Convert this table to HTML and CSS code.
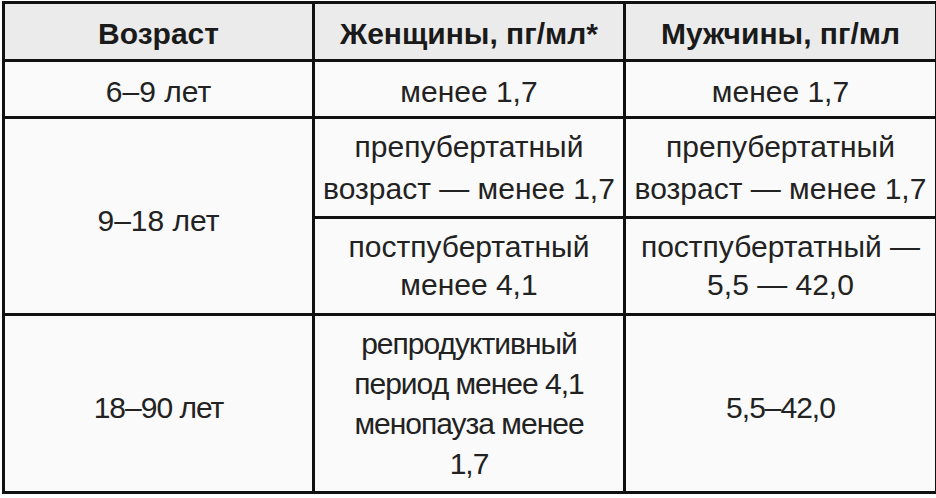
FILE: index.html
```html
<!DOCTYPE html>
<html lang="ru">
<head>
<meta charset="utf-8">
<link rel="stylesheet" href="styles.css">
</head>
<body>
<table class="norms">
  <colgroup><col class="c1"><col class="c2"><col class="c3"></colgroup>
  <thead>
    <tr class="r-head">
      <th>Возраст</th>
      <th>Женщины, пг/мл*</th>
      <th>Мужчины, пг/мл</th>
    </tr>
  </thead>
  <tbody>
    <tr class="r1">
      <td>6–9 лет</td>
      <td>менее 1,7</td>
      <td>менее 1,7</td>
    </tr>
    <tr class="r2a">
      <td rowspan="2" class="low">9–18 лет</td>
      <td>препубертатный<br>возраст — менее 1,7</td>
      <td>препубертатный<br>возраст — менее 1,7</td>
    </tr>
    <tr class="r2b">
      <td>постпубертатный<br>менее 4,1</td>
      <td>постпубертатный —<br>5,5 — 42,0</td>
    </tr>
    <tr class="r3">
      <td class="squeeze low">18–90 лет</td>
      <td class="squeeze">репродуктивный<br>период менее 4,1<br>менопауза менее<br>1,7</td>
      <td class="squeeze low">5,5–42,0</td>
    </tr>
  </tbody>
</table>
</body>
</html>
```

FILE: styles.css
```css
html, body {
  margin: 0;
  padding: 0;
  background: #ffffff;
}

.norms {
  margin: 1px 0 0 2px;
  width: 933px;
  border-collapse: collapse;
  table-layout: fixed;
  font-family: "Liberation Sans", Arial, sans-serif;
  font-size: 30px;
  color: #222;
}

.c1 { width: 310px; }
.c2 { width: 311px; }
.c3 { width: 312px; }

.norms th,
.norms td {
  border: 3px solid #111;
  text-align: center;
  vertical-align: middle;
  padding: 0 4px;
  line-height: 40px;
  background: #fafafa;
}

.norms th {
  background: #ebebeb;
  font-weight: bold;
  color: #1a1a1a;
  padding-top: 5px;
}

.r-head { height: 58px; }
.r1 { height: 57px; }
.r1 td { padding-top: 5px; }
.r2a { height: 100px; }
.r2a td { line-height: 42px; }
.r2b { height: 97px; }
.r2b td { line-height: 38px; }
.r3 { height: 178px; }

.norms td.low {
  padding-top: 9px;
}

.squeeze {
  line-height: 38px;
  letter-spacing: -1px;
}
```
